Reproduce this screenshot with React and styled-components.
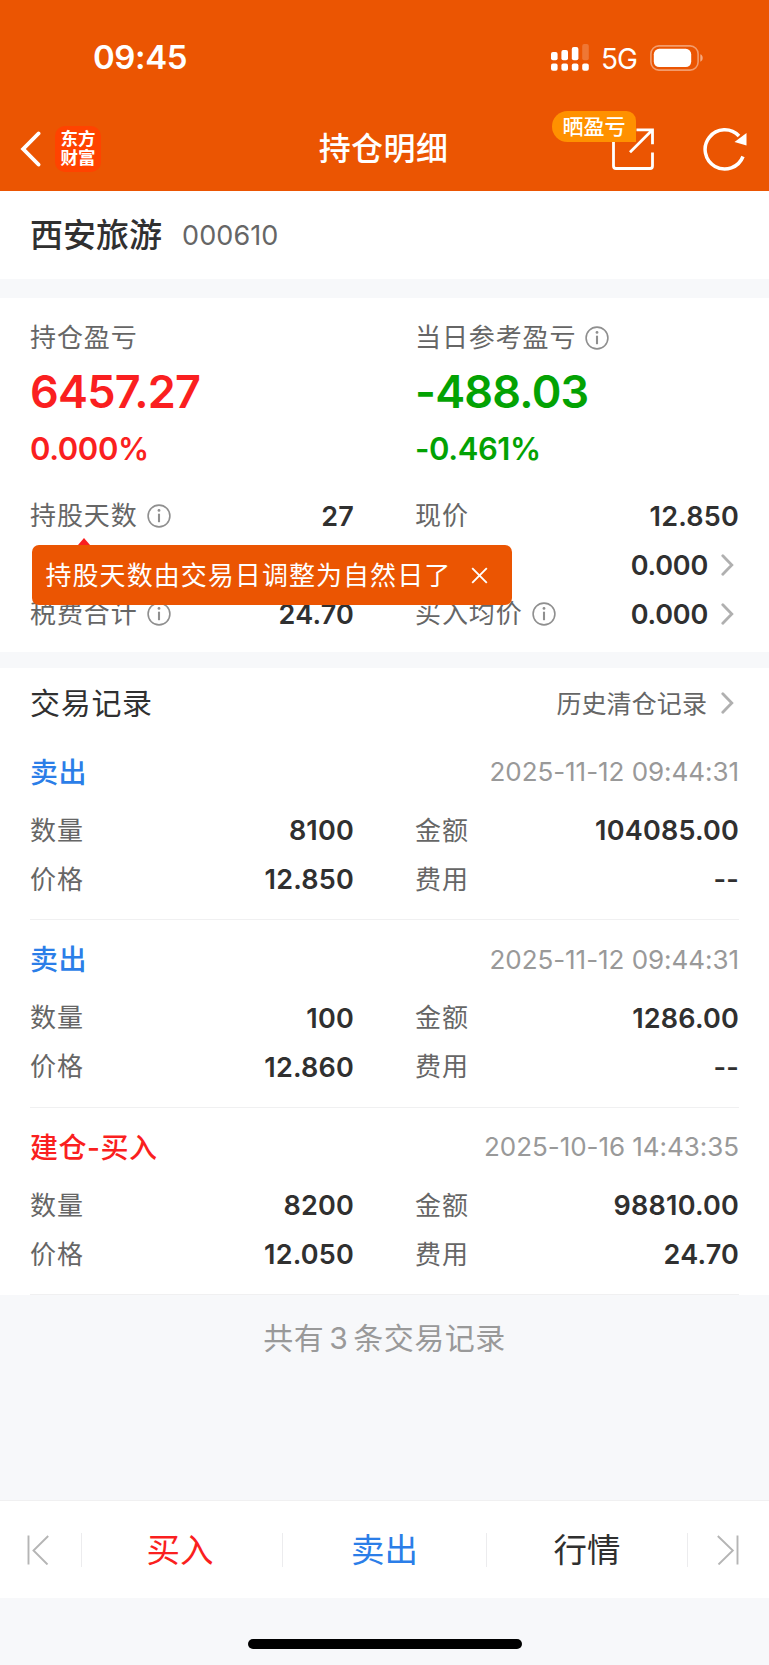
import React, { useState } from "react";
import styled, { createGlobalStyle, ThemeProvider } from "styled-components";

const theme = {
  brand: "#eb5502",
  red: "#fa1f20",
  green: "#03a203",
  blue: "#2b7ee8",
  ink: "#303030",
  label: "#666666",
  muted: "#999999",
  page: "#f7f8fa",
  line: "#f0f0f1",
};

const GlobalStyle = createGlobalStyle`
  * {
    box-sizing: border-box;
  }

  body {
    margin: 0;
    background: #f7f8fa;
    font-family: Inter, "Noto Sans CJK SC", sans-serif;
    -webkit-font-smoothing: antialiased;
  }

  button {
    padding: 0;
    border: 0;
    background: none;
    font-family: inherit;
    cursor: pointer;
  }

  svg {
    display: block;
    flex: none;
  }
`;

const Screen = styled.div`
  display: flex;
  flex-direction: column;
  width: 769px;
  height: 1665px;
  overflow: hidden;
  background: ${({ theme }) => theme.page};
  white-space: nowrap;
`;

const Header = styled.header`
  height: 191px;
  color: #fff;
  background: ${({ theme }) => theme.brand};
`;

const StatusBar = styled.div`
  display: flex;
  align-items: center;
  justify-content: space-between;
  height: 105px;
  padding: 10px 65px 0 93px;
`;

const Clock = styled.span`
  padding-bottom: 1px;
  font-size: 33px;
  font-weight: 600;
  letter-spacing: -0.4px;
`;

const StatusIcons = styled.div`
  display: flex;
  align-items: center;
`;

const Network = styled.span`
  margin: 2px 13px 0 12px;
  font-size: 28px;
  letter-spacing: -1px;
`;

const NavBar = styled.nav`
  display: grid;
  grid-template-columns: 1fr auto 1fr;
  align-items: center;
  height: 86px;
  padding: 1px 22px 0 20px;
`;

const NavSide = styled.div`
  display: flex;
  align-items: center;
  justify-content: ${({ $end }) => ($end ? "flex-end" : "flex-start")};
  gap: ${({ $end }) => ($end ? 49 : 14)}px;
`;

const Title = styled.h1`
  margin: 0;
  font-size: 32px;
  font-weight: 500;
  line-height: 40px;
  letter-spacing: 0.4px;
`;

const Logo = styled.div`
  display: flex;
  flex-direction: column;
  align-items: center;
  justify-content: center;
  width: 46px;
  height: 46px;
  padding-bottom: 2px;
  border-radius: 10px;
  background: #ff4300;
  font-size: 17.5px;
  font-weight: 700;
  line-height: 19px;
`;

const ShareButton = styled.button`
  position: relative;
  color: #fff;
`;

const ShareBadge = styled.span`
  position: absolute;
  top: -17px;
  right: 18px;
  width: 84px;
  height: 31px;
  border-radius: 16px 10px 0 16px;
  background: #ff9100;
  color: #fff;
  font-size: 21px;
  font-weight: 500;
  line-height: 31px;
  text-align: center;
`;

const StockBar = styled.section`
  display: flex;
  align-items: center;
  gap: 20px;
  height: 88px;
  padding: 0 30px;
  background: #fff;
`;

const StockName = styled.h2`
  margin: 0;
  color: ${({ theme }) => theme.ink};
  font-size: 33px;
  font-weight: 500;
  line-height: 44px;
`;

const StockCode = styled.span`
  color: ${({ theme }) => theme.label};
  font-size: 27px;
  letter-spacing: 0.1px;
`;

const Panel = styled.section`
  height: ${({ $height }) => $height}px;
  margin-top: ${({ $gap }) => $gap}px;
  padding: 0 30px;
  background: #fff;
`;

const Columns = styled.div`
  display: grid;
  grid-template-columns: 324px 324px;
  justify-content: space-between;
`;

const Summary = styled.div`
  display: flex;
  flex-direction: column;
  padding-top: 20px;
  color: ${({ theme, $tone }) => theme[$tone]};
`;

const Label = styled.span`
  display: flex;
  align-items: center;
  gap: 9px;
  color: ${({ theme }) => theme.label};
  font-size: 26px;
  line-height: 40px;
  letter-spacing: 0.9px;
`;

const Profit = styled.span`
  margin-top: 7px;
  font-size: 45px;
  font-weight: 600;
  line-height: 54px;
  letter-spacing: -0.8px;
`;

const Percent = styled.span`
  margin-top: 10px;
  font-size: 31px;
  font-weight: 600;
  line-height: 40px;
  letter-spacing: -0.4px;
`;

const Details = styled(Columns)`
  position: relative;
  margin-top: 22.5px;
`;

const Field = styled.div`
  display: flex;
  align-items: center;
  justify-content: space-between;
  height: 49px;
`;

const Value = styled.span`
  display: flex;
  align-items: center;
  gap: 13px;
  padding-right: ${({ $link }) => ($link ? 5 : 0)}px;
  color: ${({ theme }) => theme.ink};
  font-size: 27px;
  font-weight: 600;
  letter-spacing: ${({ $link }) => ($link ? -0.2 : 0.2)}px;
`;

const Tip = styled.div`
  position: absolute;
  top: 53.5px;
  left: 1.5px;
  display: flex;
  align-items: center;
  gap: 20px;
  width: 480px;
  height: 60px;
  padding: 0 0 3px 14px;
  border-radius: 7px;
  background: ${({ theme }) => theme.brand};
  color: #fff;
  font-size: 26px;
  letter-spacing: 1.05px;

  &::before {
    content: "";
    position: absolute;
    top: -7px;
    left: 46px;
    border: 6.5px solid transparent;
    border-top: 0;
    border-bottom: 7px solid ${({ theme }) => theme.red};
  }
`;

const TipClose = styled.button`
  padding-top: 3px;
`;

const RecordsHead = styled.div`
  display: flex;
  align-items: center;
  justify-content: space-between;
  height: 70px;
  margin-bottom: -5px;
  padding-right: 5px;
`;

const RecordsTitle = styled.h3`
  margin: 0;
  padding-bottom: 3px;
  color: ${({ theme }) => theme.ink};
  font-size: 30px;
  font-weight: 400;
  letter-spacing: 0.7px;
`;

const HistoryLink = styled.button`
  display: flex;
  align-items: center;
  gap: 14px;
  color: ${({ theme }) => theme.label};
  font-size: 25px;
  letter-spacing: 0.1px;

  span {
    padding-bottom: 2px;
  }
`;

const RecordItem = styled.article`
  height: 187.6px;
  padding-top: 19px;
  border-bottom: 1px solid ${({ theme }) => theme.line};
`;

const RecordTop = styled.div`
  display: flex;
  align-items: center;
  justify-content: space-between;
  height: 40px;
  margin-bottom: 14.5px;
`;

const RecordType = styled.span`
  padding-bottom: 2px;
  color: ${({ theme, $tone }) => theme[$tone]};
  font-size: 28px;
  font-weight: 500;
  letter-spacing: 0.5px;
`;

const RecordTime = styled.time`
  color: ${({ theme }) => theme.muted};
  font-size: 26px;
  letter-spacing: -0.05px;
`;

const Total = styled.p`
  flex: 1;
  margin: 0;
  padding-top: 22px;
  color: ${({ theme }) => theme.muted};
  font-size: 30px;
  line-height: 42px;
  letter-spacing: 0.5px;
  word-spacing: -4px;
  text-align: center;
`;

const TabBar = styled.footer`
  display: grid;
  grid-template-columns: 82px 201px 204px 201px 81px;
  align-items: center;
  height: 98px;
  border-top: 1px solid ${({ theme }) => theme.line};
  background: #fff;
`;

const Tab = styled.button`
  display: flex;
  align-items: center;
  justify-content: center;
  height: 34px;
  padding-right: ${({ $inset = 0 }) => $inset}px;
  border-right: 1px solid ${({ $last }) => ($last ? "transparent" : "#ececee")};
  color: ${({ theme, $tone }) => theme[$tone]};
  font-size: 33.5px;
  line-height: 34px;
`;

const HomeArea = styled.div`
  display: flex;
  justify-content: center;
  height: 67px;
  padding-top: 41px;
`;

const HomeIndicator = styled.div`
  width: 274px;
  height: 10px;
  border-radius: 5px;
  background: #000;
`;

const SignalIcon = () => (
  <svg width="38" height="27" viewBox="0 0 38 27" fill="#fff">
    <rect x="0" y="8" width="6.6" height="8.3" rx="2" />
    <rect x="10.4" y="6" width="6.6" height="10.3" rx="2" />
    <rect x="20.8" y="3" width="6.6" height="13.3" rx="2" />
    <rect x="31.2" y="0" width="6.6" height="16.3" rx="2" opacity="0.2" />
    {[0, 10.4, 20.8, 31.2].map((x) => (
      <rect key={x} x={x} y="19.5" width="6.6" height="7.2" rx="2" />
    ))}
  </svg>
);

const BatteryIcon = () => (
  <svg width="54" height="26" viewBox="0 0 54 26">
    <rect x="0.9" y="0.9" width="47.2" height="24.2" rx="8" fill="none" stroke="#fff" strokeWidth="1.6" opacity="0.42" />
    <rect x="3.8" y="3.8" width="37.4" height="18.2" rx="5.4" fill="#fff" />
    <path d="M50.3 9.3c3.2 1 3.2 6.4 0 7.4z" fill="#fff" opacity="0.5" />
  </svg>
);

const BackIcon = () => (
  <svg width="21" height="36" viewBox="0 0 21 36" fill="none" stroke="#fff" strokeWidth="3.9">
    <path d="M18.5 2.5 3.2 18l15.3 15.5" strokeLinecap="round" />
  </svg>
);

const ShareIcon = () => (
  <svg width="42" height="42" viewBox="0 0 42 42" fill="none" stroke="#fff" strokeWidth="2.8">
    <path d="M1.5 10v28q0 2.500 2.500 2.500h34q2.500 0 2.500-2.500V24.500" />
    <path d="M24.5 1.8h16v14.400M40.500 1.800 18 24.300" />
  </svg>
);

const RefreshIcon = () => (
  <svg width="44" height="44" viewBox="0 0 44 44">
    <path d="M36 9A19.600 19.600 0 1 0 40 29.500" fill="none" stroke="#fff" strokeWidth="3.500" />
    <path d="M43.500 6v12.500L31.500 15z" fill="#fff" />
  </svg>
);

const InfoIcon = () => (
  <svg width="24" height="24" viewBox="0 0 24 24" fill="none" stroke="#8f8f8f">
    <circle cx="12" cy="12" r="10.9" strokeWidth="1.6" />
    <path d="M12 9.7v8.5" strokeWidth="2.1" />
    <circle cx="12" cy="6.4" r="1.4" fill="#8f8f8f" stroke="none" />
  </svg>
);

const ArrowIcon = () => (
  <svg width="13" height="22" viewBox="0 0 13 22" fill="none" stroke="#b0b0b0" strokeWidth="2.8">
    <path d="m1.8 1.8 9 9.2-9 9.2" strokeLinecap="round" />
  </svg>
);

const CloseIcon = () => (
  <svg width="17" height="17" viewBox="0 0 17 17" fill="none" stroke="#fff" strokeWidth="1.9">
    <path d="m1.2 1.2 14.6 14.6M15.8 1.2 1.2 15.8" />
  </svg>
);

const EdgeIcon = ({ flip }) => (
  <svg width="22" height="30" viewBox="0 0 22 30" fill="none" stroke="#b5b5b5" strokeWidth="1.9">
    {flip ? <path d="M20.5.5v29M.8 1l15 14.5-14.3 14" /> : <path d="M1.5.5v29M21.2 1 6.5 15.5l14 14" />}
  </svg>
);

const summaries = [
  { label: "持仓盈亏", profit: "6457.27", percent: "0.000%", tone: "red" },
  { label: "当日参考盈亏", profit: "-488.03", percent: "-0.461%", tone: "green", info: true },
];

// second row sits behind the tip, only its right value stays visible
const details = [
  { label: "持股天数", value: "27", info: true },
  { label: "现价", value: "12.850" },
  {},
  { value: "0.000", link: true },
  { label: "税费合计", value: "24.70", info: true },
  { label: "买入均价", value: "0.000", info: true, link: true },
];

const records = [
  { type: "卖出", tone: "blue", time: "2025-11-12 09:44:31", count: "8100", amount: "104085.00", price: "12.850", fee: "--" },
  { type: "卖出", tone: "blue", time: "2025-11-12 09:44:31", count: "100", amount: "1286.00", price: "12.860", fee: "--" },
  { type: "建仓-买入", tone: "red", time: "2025-10-16 14:43:35", count: "8200", amount: "98810.00", price: "12.050", fee: "24.70" },
];

const Detail = ({ label, value, info, link }) => (
  <Field>
    <Label>
      {label}
      {info && <InfoIcon />}
    </Label>
    <Value $link={link}>
      {value}
      {link && <ArrowIcon />}
    </Value>
  </Field>
);

const Record = ({ record }) => (
  <RecordItem>
    <RecordTop>
      <RecordType $tone={record.tone}>{record.type}</RecordType>
      <RecordTime>{record.time}</RecordTime>
    </RecordTop>
    <Columns>
      <Detail label="数量" value={record.count} />
      <Detail label="金额" value={record.amount} />
      <Detail label="价格" value={record.price} />
      <Detail label="费用" value={record.fee} />
    </Columns>
  </RecordItem>
);

const App = () => {
  const [tipOpen, setTipOpen] = useState(true);

  return (
    <ThemeProvider theme={theme}>
      <GlobalStyle />
      <Screen>
        <Header>
          <StatusBar>
            <Clock>09:45</Clock>
            <StatusIcons>
              <SignalIcon />
              <Network>5G</Network>
              <BatteryIcon />
            </StatusIcons>
          </StatusBar>
          <NavBar>
            <NavSide>
              <BackIcon />
              <Logo>
                <span>东方</span>
                <span>财富</span>
              </Logo>
            </NavSide>
            <Title>持仓明细</Title>
            <NavSide $end>
              <ShareButton>
                <ShareIcon />
                <ShareBadge>晒盈亏</ShareBadge>
              </ShareButton>
              <RefreshIcon />
            </NavSide>
          </NavBar>
        </Header>

        <StockBar>
          <StockName>西安旅游</StockName>
          <StockCode>000610</StockCode>
        </StockBar>

        <Panel $height={354} $gap={19}>
          <Columns>
            {summaries.map((item) => (
              <Summary key={item.label} $tone={item.tone}>
                <Label>
                  {item.label}
                  {item.info && <InfoIcon />}
                </Label>
                <Profit>{item.profit}</Profit>
                <Percent>{item.percent}</Percent>
              </Summary>
            ))}
          </Columns>
          <Details>
            {details.map((item, i) => (
              <Detail key={i} {...item} />
            ))}
            {tipOpen && (
              <Tip>
                持股天数由交易日调整为自然日了
                <TipClose onClick={() => setTipOpen(false)} aria-label="关闭">
                  <CloseIcon />
                </TipClose>
              </Tip>
            )}
          </Details>
        </Panel>

        <Panel $height={627.5} $gap={15.5}>
          <RecordsHead>
            <RecordsTitle>交易记录</RecordsTitle>
            <HistoryLink>
              <span>历史清仓记录</span>
              <ArrowIcon />
            </HistoryLink>
          </RecordsHead>
          {records.map((record, i) => (
            <Record key={i} record={record} />
          ))}
        </Panel>

        <Total>共有 {records.length} 条交易记录</Total>

        <TabBar>
          <Tab $inset={5} aria-label="上一个">
            <EdgeIcon />
          </Tab>
          <Tab $tone="red" $inset={4}>
            买入
          </Tab>
          <Tab $tone="blue">卖出</Tab>
          <Tab $tone="ink">行情</Tab>
          <Tab $last aria-label="下一个">
            <EdgeIcon flip />
          </Tab>
        </TabBar>
        <HomeArea>
          <HomeIndicator />
        </HomeArea>
      </Screen>
    </ThemeProvider>
  );
};

export default App;
